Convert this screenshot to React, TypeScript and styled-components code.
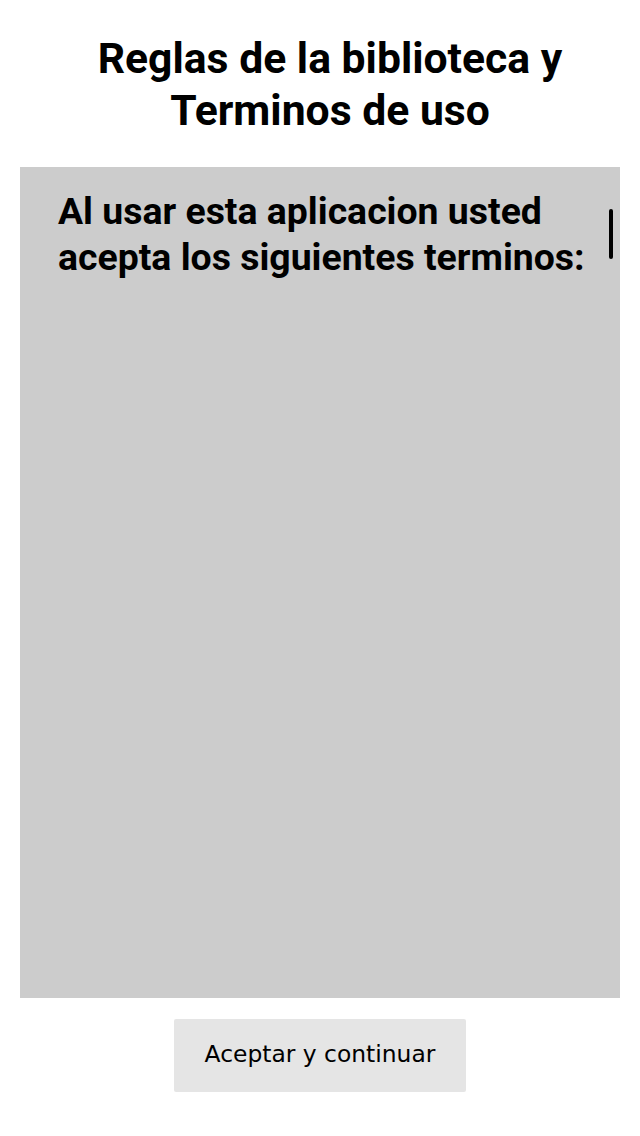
import React from "react";
import styled, { createGlobalStyle } from "styled-components";

const Global = createGlobalStyle`
  html, body { margin: 0; padding: 0; background: #ffffff; }
  body { font-family: Roboto, "Liberation Sans", sans-serif; }
`;

const Page = styled.div`
  width: 640px;
  height: 1136px;
  display: flex;
  flex-direction: column;
  align-items: center;
  box-sizing: border-box;
  padding-top: 32px;
`;

const Title = styled.h1`
  margin: 0;
  padding-left: 20px;
  font-family: Roboto, sans-serif;
  font-weight: 700;
  font-size: 42.7px;
  line-height: 52px;
  text-align: center;
  color: #000;
`;

const Panel = styled.div`
  margin-top: 31px;
  width: 600px;
  height: 831px;
  background: #cccccc;
  position: relative;
  box-sizing: border-box;
  padding: 21px 20px 0 38px;
`;

const PanelText = styled.p`
  margin: 0;
  font-family: Roboto, sans-serif;
  font-weight: 700;
  font-size: 37.4px;
  line-height: 46px;
  color: #000;
`;

const ScrollThumb = styled.div`
  position: absolute;
  top: 42px;
  right: 7px;
  width: 4px;
  height: 50px;
  border-radius: 2px;
  background: #000;
`;

const Button = styled.button`
  margin-top: 21px;
  width: 292px;
  height: 73px;
  border: none;
  border-radius: 2px;
  background: #e5e5e5;
  font-family: "DejaVu Sans", Verdana, sans-serif;
  font-size: 23.4px;
  padding: 0 0 4px;
  color: #000;
  cursor: pointer;
`;

export default function App() {
  return (
    <>
      <Global />
      <Page>
        <Title>
          Reglas de la biblioteca y
          <br />
          Terminos de uso
        </Title>
        <Panel>
          <PanelText>
            Al usar esta aplicacion usted acepta los siguientes terminos:
          </PanelText>
          <ScrollThumb />
        </Panel>
        <Button>Aceptar y continuar</Button>
      </Page>
    </>
  );
}
